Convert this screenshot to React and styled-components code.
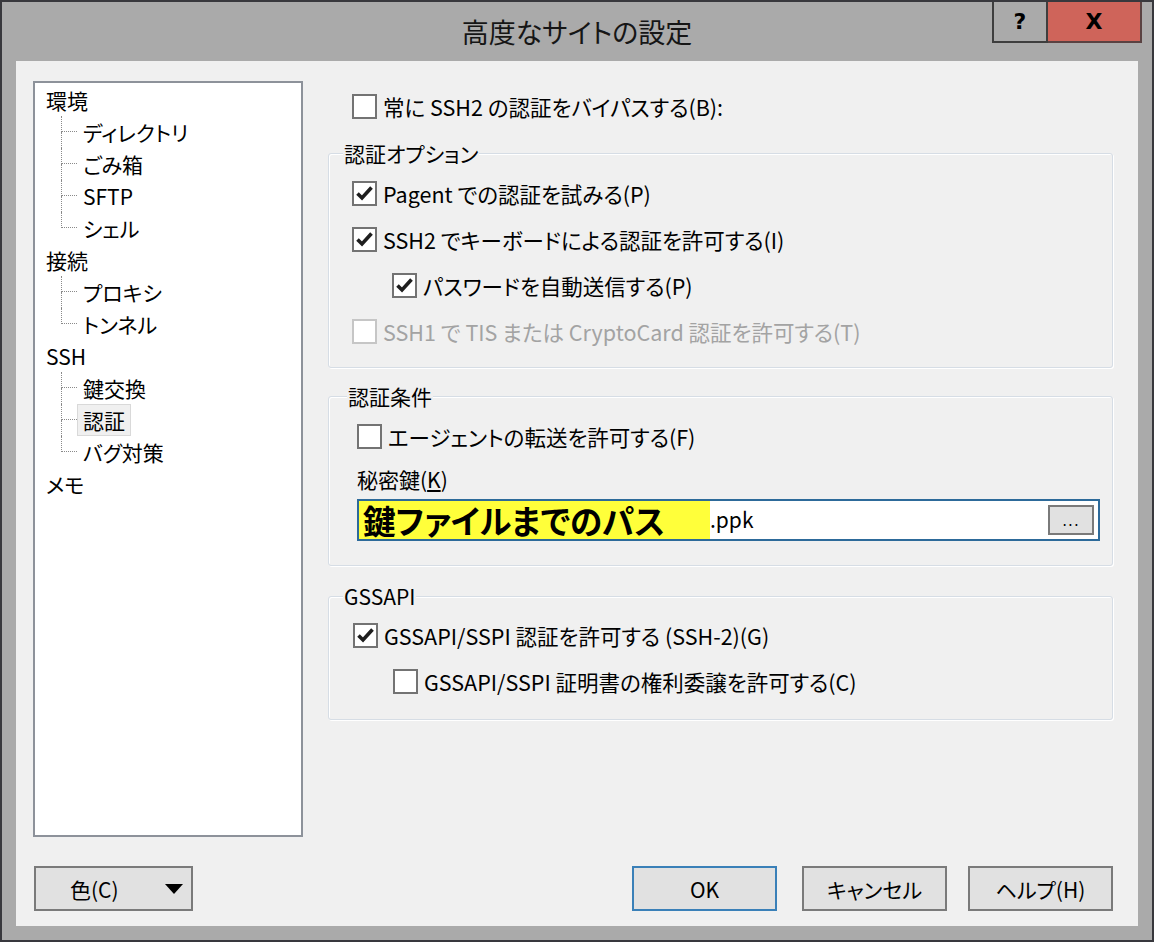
import styled, { createGlobalStyle } from "styled-components";

const GlobalStyle = createGlobalStyle`
  html, body {
    margin: 0;
    padding: 0;
    background: #ffffff;
  }
  body {
    font-family: "Noto Sans CJK JP", "Noto Sans", sans-serif;
    font-feature-settings: "palt" 1;
    color: #000;
  }
`;

const Frame = styled.div`
  width: 1154px;
  height: 942px;
  box-sizing: border-box;
  border: 2px solid #38383d;
  background: #aaaaaa;
  display: flex;
  flex-direction: column;
`;

const TitleBar = styled.div`
  height: 59px;
  display: grid;
  grid-template-columns: 1fr auto 1fr;
  align-items: start;
`;

const Title = styled.div`
  grid-column: 2;
  font-size: 27px;
  line-height: 60px;
  color: #161616;
`;

const Controls = styled.div`
  grid-column: 3;
  justify-self: end;
  display: flex;
  margin-right: 10px;
`;

const CaptionButton = styled.div`
  box-sizing: border-box;
  height: 41px;
  width: ${(p) => (p.$close ? "94px" : "56px")};
  background: ${(p) => (p.$close ? "#cf645a" : "#aaaaaa")};
  border: 2px solid ${(p) => (p.$close ? "#5a4242" : "#3e3e3e")};
  border-top: none;
  border-left: ${(p) => (p.$close ? "none" : "2px solid #3e3e3e")};
  display: flex;
  align-items: center;
  justify-content: center;
  font-family: "DejaVu Sans", sans-serif;
  font-weight: 700;
  font-size: 22px;
  color: #000;
`;

const Client = styled.div`
  flex: 1;
  margin: 0 14px 14px;
  background: #f0f0f0;
  display: flex;
  flex-direction: column;
  padding: 20px 25px 15px 17px;
  box-sizing: border-box;
  min-height: 0;
`;

const Main = styled.div`
  flex: 1;
  display: flex;
  gap: 25px;
  min-height: 0;
`;

const Tree = styled.div`
  width: 270px;
  box-sizing: border-box;
  border: 2px solid #8d929a;
  background: #ffffff;
  padding-top: 1px;
  font-size: 21px;
`;

const TreeRow = styled.div`
  height: 32px;
  display: flex;
  align-items: center;
  padding-left: ${(p) => (p.$child ? "26px" : "5px")};
`;

const Branch = styled.span`
  width: 16px;
  height: 32px;
  display: flex;
  flex-direction: column;
  flex: none;
`;

const BranchTop = styled.span`
  height: 15px;
  border-left: 1px dotted #8a8a8a;
  border-bottom: 1px dotted #8a8a8a;
`;

const BranchBottom = styled.span`
  height: 16px;
  border-left: 1px dotted ${(p) => (p.$last ? "transparent" : "#8a8a8a")};
`;

const TreeLabel = styled.span`
  height: 30px;
  line-height: 30px;
  padding: 0 5px;
  border: 1px solid ${(p) => (p.$selected ? "#d9d9d9" : "transparent")};
  background: ${(p) => (p.$selected ? "#f0f0f0" : "transparent")};
  white-space: nowrap;
`;

const Right = styled.div`
  flex: 1;
  display: flex;
  flex-direction: column;
  padding-top: 2px;
`;

const Row = styled.div`
  height: 46px;
  display: flex;
  align-items: center;
  gap: 6px;
  padding-left: ${(p) => p.$indent || 0}px;
  font-size: 21.5px;
  white-space: nowrap;
  color: ${(p) => (p.$disabled ? "#a3a3a3" : "#000")};
`;

const Box = styled.span`
  box-sizing: border-box;
  width: 25px;
  height: 25px;
  flex: none;
  background: #fff;
  border: 2px solid ${(p) => (p.$disabled ? "#c6c6c6" : "#737373")};
  display: flex;
  align-items: center;
  justify-content: center;
`;

const Group = styled.fieldset`
  margin: ${(p) => p.$top}px 0 0;
  padding: 0 12px ${(p) => p.$bottom}px ${(p) => p.$legendLeft}px;
  border: 1px solid #d6dde5;
  border-radius: 3px;
  box-shadow: inset 1px 1px 0 #ffffff, 1px 1px 0 #ffffff;
  min-width: 0;
`;

const Legend = styled.legend`
  padding: 0 1px;
  font-size: 21px;
  line-height: 26px;
  background: #f0f0f0;
`;

const GroupBody = styled.div`
  padding-top: ${(p) => p.$top}px;
  padding-left: ${(p) => p.$left}px;
`;

const FieldLabel = styled.div`
  font-size: 21px;
  line-height: 26px;
  margin-top: 7px;
`;

const Under = styled.span`
  text-decoration: underline;
`;

const PathInput = styled.div`
  margin-top: 7px;
  height: 42px;
  box-sizing: border-box;
  border: 2px solid #2d6a9a;
  background: #fff;
  display: flex;
  align-items: stretch;
  padding-right: 4px;
`;

const Highlight = styled.span`
  width: 351px;
  flex: none;
  background: #ffff3a;
  font-weight: 700;
  font-size: 32.5px;
  line-height: 38px;
  padding-left: 4px;
  box-sizing: border-box;
  white-space: nowrap;
`;

const PathTail = styled.span`
  flex: 1;
  font-size: 21px;
  line-height: 36px;
`;

const Browse = styled.span`
  align-self: center;
  box-sizing: border-box;
  width: 46px;
  height: 30px;
  background: #e1e1e1;
  border: 2px solid #7a7a7a;
  font-family: "DejaVu Sans", sans-serif;
  font-size: 15px;
  display: flex;
  align-items: flex-end;
  justify-content: center;
  padding-bottom: 3px;
  letter-spacing: 1px;
`;

const Footer = styled.div`
  margin-top: 29px;
  height: 45px;
  display: flex;
  align-items: stretch;
  padding-left: 1px;
`;

const Button = styled.div`
  box-sizing: border-box;
  width: ${(p) => p.$w || 145}px;
  margin-left: ${(p) => p.$gap || 0}px;
  background: #e1e1e1;
  border: 2px solid ${(p) => (p.$default ? "#3a80b8" : "#7a7a7a")};
  display: flex;
  align-items: center;
  justify-content: ${(p) => (p.$split ? "space-between" : "center")};
  padding: ${(p) => (p.$split ? "0 8px 0 34px" : "0")};
  font-size: 21px;
`;

const Spacer = styled.div`
  flex: 1;
`;

function Check({ checked, disabled }) {
  return (
    <Box $disabled={disabled}>
      {checked && (
        <svg width="21" height="21" viewBox="0 0 21 21">
          <path
            d="M3.5 10.5 L8 15 L17.5 4.5"
            fill="none"
            stroke="#1e1e1e"
            strokeWidth="3.6"
            strokeLinejoin="miter"
          />
        </svg>
      )}
    </Box>
  );
}

function Option({ checked, disabled, indent, children }) {
  return (
    <Row $indent={indent} $disabled={disabled}>
      <Check checked={checked} disabled={disabled} />
      <span>{children}</span>
    </Row>
  );
}

const treeItems = [
  { label: "環境" },
  { label: "ディレクトリ", child: true },
  { label: "ごみ箱", child: true },
  { label: "SFTP", child: true },
  { label: "シェル", child: true, last: true },
  { label: "接続" },
  { label: "プロキシ", child: true },
  { label: "トンネル", child: true, last: true },
  { label: "SSH" },
  { label: "鍵交換", child: true },
  { label: "認証", child: true, selected: true },
  { label: "バグ対策", child: true, last: true },
  { label: "メモ" },
];

export default function App() {
  return (
    <>
      <GlobalStyle />
      <Frame>
        <TitleBar>
          <Title>高度なサイトの設定</Title>
          <Controls>
            <CaptionButton>?</CaptionButton>
            <CaptionButton $close>X</CaptionButton>
          </Controls>
        </TitleBar>
        <Client>
          <Main>
            <Tree>
              {treeItems.map((item) => (
                <TreeRow key={item.label} $child={item.child}>
                  {item.child && (
                    <Branch>
                      <BranchTop />
                      <BranchBottom $last={item.last} />
                    </Branch>
                  )}
                  <TreeLabel $selected={item.selected}>{item.label}</TreeLabel>
                </TreeRow>
              ))}
            </Tree>
            <Right>
              <Option indent={24}>常に SSH2 の認証をバイパスする(B):</Option>

              <Group $top={11} $bottom={13} $legendLeft={14}>
                <Legend>認証オプション</Legend>
                <GroupBody $top={4} $left={9}>
                  <Option checked>Pagent での認証を試みる(P)</Option>
                  <Option checked>SSH2 でキーボードによる認証を許可する(I)</Option>
                  <Option checked indent={40}>
                    パスワードを自動送信する(P)
                  </Option>
                  <Option disabled>SSH1 で TIS または CryptoCard 認証を許可する(T)</Option>
                </GroupBody>
              </Group>

              <Group $top={15} $bottom={24} $legendLeft={18}>
                <Legend>認証条件</Legend>
                <GroupBody $top={4} $left={10}>
                  <Option>エージェントの転送を許可する(F)</Option>
                  <FieldLabel>
                    秘密鍵(<Under>K</Under>)
                  </FieldLabel>
                  <PathInput>
                    <Highlight>鍵ファイルまでのパス</Highlight>
                    <PathTail>.ppk</PathTail>
                    <Browse>...</Browse>
                  </PathInput>
                </GroupBody>
              </Group>

              <Group $top={17} $bottom={15} $legendLeft={14}>
                <Legend>GSSAPI</Legend>
                <GroupBody $top={3} $left={10}>
                  <Option checked>GSSAPI/SSPI 認証を許可する (SSH-2)(G)</Option>
                  <Option indent={40}>GSSAPI/SSPI 証明書の権利委譲を許可する(C)</Option>
                </GroupBody>
              </Group>
            </Right>
          </Main>
          <Footer>
            <Button $w={159} $split>
              <span>色(C)</span>
              <svg width="18" height="10" viewBox="0 0 18 10">
                <path d="M0 0 H18 L9 10 Z" fill="#000" />
              </svg>
            </Button>
            <Spacer />
            <Button $default>OK</Button>
            <Button $gap={25}>キャンセル</Button>
            <Button $gap={21}>ヘルプ(H)</Button>
          </Footer>
        </Client>
      </Frame>
    </>
  );
}
